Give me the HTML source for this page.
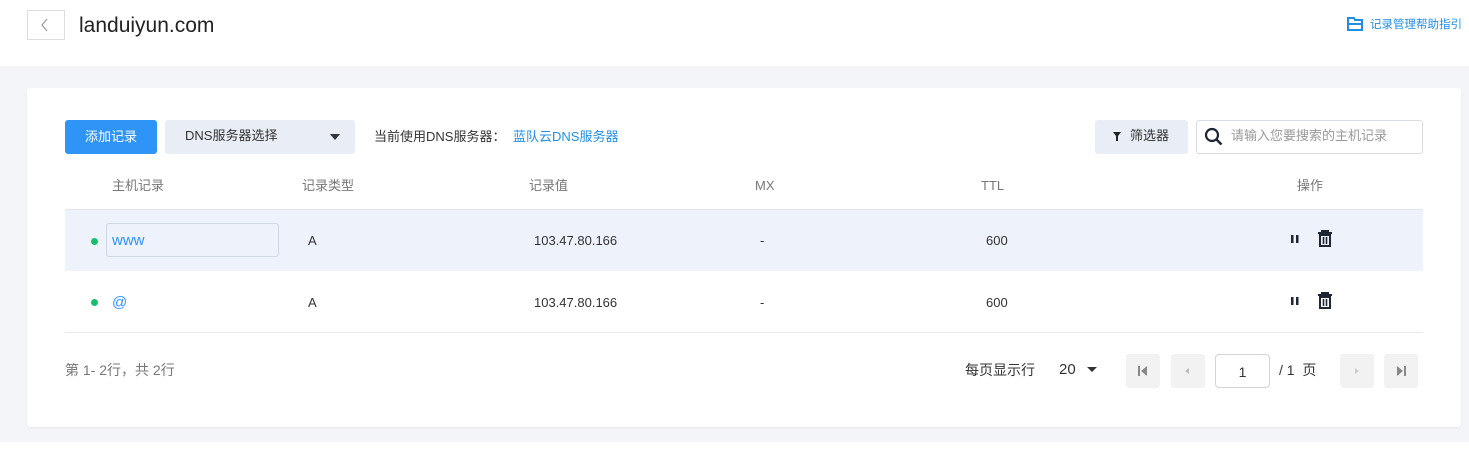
<!DOCTYPE html><html><head><meta charset="utf-8"><style>
*{box-sizing:border-box;margin:0;padding:0}
body{width:1469px;height:464px;background:#fff;font-family:"Liberation Sans","Noto Sans CJK SC",sans-serif;position:relative;overflow:hidden;color:#333}
.a{position:absolute}
.hdr{left:0;top:0;width:1469px;height:66px;background:#fff;box-shadow:0 2px 4px rgba(0,0,0,.04)}
.bg{left:0;top:66px;width:1469px;height:376px;background:#f3f5f8}
.card{left:27px;top:88px;width:1434px;height:339px;background:#fff;border-radius:3px;box-shadow:0 1px 2px rgba(0,0,0,.06)}
.t{font-size:13px;white-space:nowrap;line-height:16px}
.pg{width:34px;height:34px;background:#f2f2f2;border-radius:3px}
</style></head><body>
<div class="a hdr"></div>
<div class="a" style="left:27px;top:10px;width:38px;height:30px;border:1px solid #ddd;background:#fff"></div>
<svg class="a" style="left:40px;top:18px" width="10" height="14"><path d="M7 1L2 7l5 6" fill="none" stroke="#999" stroke-width="1.2"/></svg>
<div class="a" style="left:79px;top:14px;font-size:21px;color:#222">landuiyun.com</div>
<svg class="a" style="left:1347px;top:17px" width="16" height="14"><path d="M1 1h6l1 2h7v10H1z" fill="none" stroke="#1f8fe6" stroke-width="2"/><path d="M1 7h14" stroke="#1f8fe6" stroke-width="2"/></svg>
<div class="a t" style="left:1370px;top:17px;font-size:11.5px;color:#1f8fe6">记录管理帮助指引</div>
<div class="a bg"></div>
<div class="a card"></div>
<div class="a" style="left:65px;top:120px;width:92px;height:34px;background:#2e94f5;border-radius:3px;color:#fff;font-size:13px;text-align:center;line-height:34px">添加记录</div>
<div class="a" style="left:165px;top:120px;width:190px;height:34px;background:#e9edf5;border-radius:3px"></div>
<div class="a t" style="left:185px;top:128px;color:#333">DNS服务器选择</div>
<svg class="a" style="left:330px;top:134px" width="10" height="6"><path d="M0 0h10L5 6z" fill="#333"/></svg>
<div class="a t" style="left:374px;top:129px;color:#333">当前使用DNS服务器：</div>
<div class="a t" style="left:513px;top:129px;color:#1f8fe6">蓝队云DNS服务器</div>
<div class="a" style="left:1095px;top:120px;width:93px;height:34px;background:#e9edf5;border-radius:3px"></div>
<svg class="a" style="left:1113px;top:132px" width="8" height="9"><path d="M0 0h8L5 4v5H3V4z" fill="#222"/></svg>
<div class="a t" style="left:1130px;top:128px;color:#333">筛选器</div>
<div class="a" style="left:1196px;top:120px;width:227px;height:34px;border:1px solid #d9dce3;border-radius:3px;background:#fff"></div>
<svg class="a" style="left:1204px;top:127px" width="20" height="20"><circle cx="8" cy="8" r="6" fill="none" stroke="#1e2636" stroke-width="2.2"/><path d="M12.5 12.5l5 5" stroke="#1e2636" stroke-width="2.4"/></svg>
<div class="a t" style="left:1231px;top:128px;color:#999">请输入您要搜索的主机记录</div>
<div class="a t" style="left:112px;top:178px;color:#777">主机记录</div>
<div class="a t" style="left:302px;top:178px;color:#777">记录类型</div>
<div class="a t" style="left:529px;top:178px;color:#777">记录值</div>
<div class="a t" style="left:755px;top:178px;color:#777">MX</div>
<div class="a t" style="left:981px;top:178px;color:#777">TTL</div>
<div class="a t" style="left:1297px;top:178px;color:#777">操作</div>
<div class="a" style="left:65px;top:209px;width:1358px;height:62px;background:#eef2fa;border-top:1px solid #e3e6ed"></div>
<div class="a" style="left:65px;top:332px;width:1358px;height:1px;background:#e6e8ee"></div>
<div class="a" style="left:91px;top:238px;width:7px;height:7px;border-radius:50%;background:#19be6b"></div>
<div class="a" style="left:106px;top:223px;width:173px;height:34px;border:1px solid #cfd6e4;border-radius:3px"></div>
<div class="a" style="left:112px;top:232px;font-size:15px;color:#2e94f5">www</div>
<div class="a" style="left:91px;top:299px;width:7px;height:7px;border-radius:50%;background:#19be6b"></div>
<div class="a" style="left:112px;top:294px;font-size:15px;color:#2e94f5">@</div>
<div class="a t" style="left:308px;top:233px">A</div><div class="a t" style="left:308px;top:295px">A</div>
<div class="a t" style="left:534px;top:233px">103.47.80.166</div><div class="a t" style="left:534px;top:295px">103.47.80.166</div>
<div class="a t" style="left:760px;top:233px">-</div><div class="a t" style="left:760px;top:295px">-</div>
<div class="a t" style="left:986px;top:233px">600</div><div class="a t" style="left:986px;top:295px">600</div>
<svg class="a" style="left:1290px;top:233px" width="10" height="12"><rect x="1" y="2" width="2.5" height="8" fill="#1e2636"/><rect x="6" y="2" width="2.5" height="8" fill="#1e2636"/></svg>
<svg class="a" style="left:1316px;top:230px" width="18" height="18"><path d="M2 3h14M6 3V1h6v2" fill="none" stroke="#1e2636" stroke-width="2"/><path d="M4 5h10v11H4z" fill="none" stroke="#1e2636" stroke-width="2"/><path d="M7.5 7v7M10.5 7v7" stroke="#1e2636" stroke-width="1.6"/></svg>
<svg class="a" style="left:1290px;top:295px" width="10" height="12"><rect x="1" y="2" width="2.5" height="8" fill="#1e2636"/><rect x="6" y="2" width="2.5" height="8" fill="#1e2636"/></svg>
<svg class="a" style="left:1316px;top:292px" width="18" height="18"><path d="M2 3h14M6 3V1h6v2" fill="none" stroke="#1e2636" stroke-width="2"/><path d="M4 5h10v11H4z" fill="none" stroke="#1e2636" stroke-width="2"/><path d="M7.5 7v7M10.5 7v7" stroke="#1e2636" stroke-width="1.6"/></svg>
<div class="a t" style="left:65px;top:362px;color:#777;font-size:14px">第 1- 2行，共 2行</div>
<div class="a t" style="left:965px;top:362px;color:#333;font-size:14px">每页显示行</div>
<div class="a" style="left:1059px;top:361px;font-size:15px">20</div>
<svg class="a" style="left:1087px;top:367px" width="10" height="6"><path d="M0 0h10L5 5z" fill="#333"/></svg>
<div class="a pg" style="left:1126px;top:354px"></div><svg class="a" style="left:1138px;top:365px" width="10" height="12"><rect x="0" y="1" width="2" height="10" fill="#888"/><path d="M9 1v10L3 6z" fill="#888"/></svg>
<div class="a pg" style="left:1171px;top:354px"></div><svg class="a" style="left:1184px;top:368px" width="6" height="6"><path d="M5 0v6L1 3z" fill="#bbb"/></svg>
<div class="a" style="left:1215px;top:354px;width:55px;height:34px;border:1px solid #d0d4dc;border-radius:4px;background:#fff;text-align:center;line-height:34px;font-size:14px">1</div>
<div class="a t" style="left:1279px;top:362px;font-size:14px">/ 1 &nbsp;页</div>
<div class="a pg" style="left:1340px;top:354px"></div><svg class="a" style="left:1354px;top:368px" width="6" height="6"><path d="M1 0v6l4-3z" fill="#ccc"/></svg>
<div class="a pg" style="left:1384px;top:354px"></div><svg class="a" style="left:1396px;top:365px" width="10" height="12"><path d="M1 1v10l6-5z" fill="#888"/><rect x="8" y="1" width="2" height="10" fill="#888"/></svg>
</body></html>
